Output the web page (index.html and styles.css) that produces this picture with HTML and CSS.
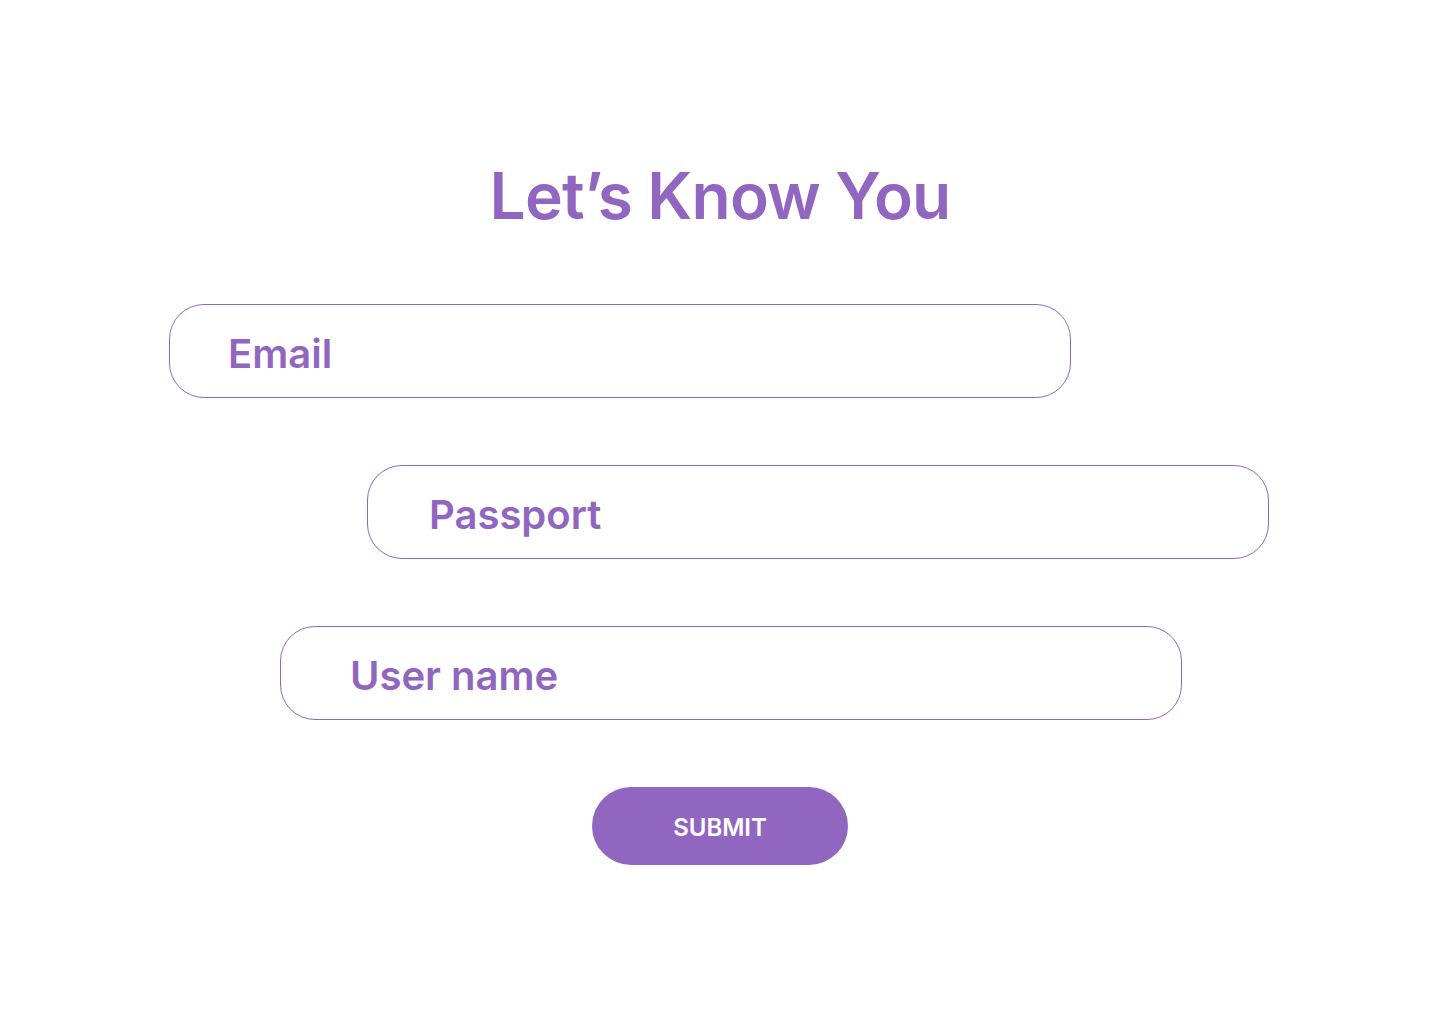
FILE: index.html
```html
<!DOCTYPE html>
<html lang="en">
<head>
<meta charset="utf-8">
<title>Let’s Know You</title>
<link rel="stylesheet" href="styles.css">
</head>
<body>
<main class="page">
  <h1 class="title">Let’s Know You</h1>
  <form class="form">
    <input class="field field--email" type="email" placeholder="Email">
    <input class="field field--passport" type="text" placeholder="Passport">
    <input class="field field--username" type="text" placeholder="User name">
    <div class="actions">
      <button class="submit" type="button">SUBMIT</button>
    </div>
  </form>
</main>
</body>
</html>
```

FILE: styles.css
```css
* { box-sizing: border-box; }

html, body {
  margin: 0;
  padding: 0;
  background: #ffffff;
}

body {
  font-family: Inter, "Noto Sans", "Liberation Sans", sans-serif;
  color: #9166c1;
}

.page {
  padding-top: 157px;
  width: 1440px;
}

.title {
  margin: 0;
  text-align: center;
  font-size: 64px;
  line-height: 78px;
  font-weight: 600;
  letter-spacing: -0.8px;
  color: #9166c1;
}

.form {
  display: flex;
  flex-direction: column;
  align-items: flex-start;
  gap: 67px;
  margin-top: 69px;
}

.field {
  display: block;
  width: 902px;
  height: 94px;
  border: 1px solid #9166c1;
  border-radius: 35px;
  background: #ffffff;
  font-family: inherit;
  font-size: 40px;
  font-weight: 600;
  color: #9166c1;
  padding: 4px 20px 0 60px;
  outline: none;
}

.field::placeholder {
  color: #9166c1;
  opacity: 1;
}

.field--email { margin-left: 169px; padding-left: 58px; }
.field--passport { margin-left: 367px; padding-left: 61px; }
.field--username { margin-left: 280px; padding-left: 69px; }

.actions {
  width: 100%;
  display: flex;
  justify-content: center;
}

.submit {
  width: 256px;
  height: 78px;
  border: none;
  border-radius: 39px;
  background: #9166c1;
  color: #ffffff;
  font-family: inherit;
  font-size: 24px;
  font-weight: 560;
  padding: 2px 0 0;
  cursor: pointer;
}
```
